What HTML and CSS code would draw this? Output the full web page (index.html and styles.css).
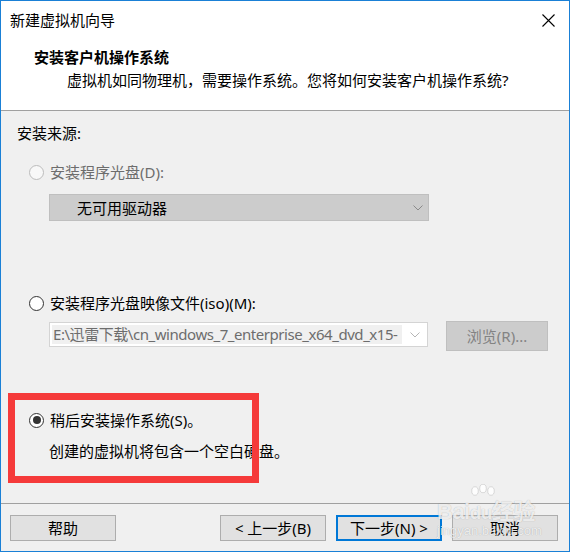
FILE: index.html
```html
<!DOCTYPE html>
<html lang="zh-CN">
<head>
<meta charset="utf-8">
<title>新建虚拟机向导</title>
<link rel="stylesheet" href="styles.css">
</head>
<body>
<div class="window">
  <div class="header">
    <div class="titlebar">
      <span class="title">新建虚拟机向导</span>
      <svg class="close" width="13" height="13" viewBox="0 0 13 13"><path d="M0.5 0.5 L12.5 12.5 M12.5 0.5 L0.5 12.5" stroke="#000" stroke-width="1.1" fill="none"/></svg>
    </div>
    <div class="heading">安装客户机操作系统</div>
    <div class="subheading">虚拟机如同物理机，需要操作系统。您将如何安装客户机操作系统?</div>
  </div>

  <div class="content">
    <div class="label">安装来源:</div>

    <div class="radio-row is-disabled">
      <span class="radio"></span>
      <span>安装程序光盘(D):</span>
    </div>
    <div class="select">
      <span class="select-text">无可用驱动器</span>
      <svg class="chev" width="10" height="6" viewBox="0 0 10 6"><path d="M0.5 0.5 L5 5 L9.5 0.5" stroke="#8a8a8a" stroke-width="1" fill="none"/></svg>
    </div>

    <div class="radio-row radio-iso">
      <span class="radio"></span>
      <span>安装程序光盘映像文件(iso)(M):</span>
    </div>
    <div class="iso-row">
      <div class="combo">
        <span class="combo-text">E:\迅雷下载\cn_windows_7_enterprise_x64_dvd_x15-</span>
        <svg class="chev chev-light" width="10" height="6" viewBox="0 0 10 6"><path d="M0.5 0.5 L5 5 L9.5 0.5" stroke="#b5b5b5" stroke-width="1" fill="none"/></svg>
      </div>
      <div class="browse">浏览(R)...</div>
    </div>

    <div class="radio-row radio-later">
      <span class="radio checked"></span>
      <span>稍后安装操作系统(S)。</span>
    </div>
    <div class="note">创建的虚拟机将包含一个空白硬盘。</div>
  </div>

  <div class="footer">
    <div class="btn">帮助</div>
    <div class="btn-group">
      <div class="btn">&lt; 上一步(B)</div>
      <div class="btn btn-default">下一步(N) &gt;</div>
      <div class="btn">取消</div>
    </div>
  </div>

  <div class="highlight"></div>

  <div class="watermark">
    <svg class="paw" width="32" height="20" viewBox="0 0 32 20">
      <ellipse cx="8" cy="7" rx="3.2" ry="4.2" fill="rgba(255,255,255,0.85)" stroke="rgba(0,0,0,0.12)"/>
      <ellipse cx="16" cy="4.5" rx="3.2" ry="4.2" fill="rgba(255,255,255,0.85)" stroke="rgba(0,0,0,0.12)"/>
      <ellipse cx="24" cy="7" rx="3.2" ry="4.2" fill="rgba(255,255,255,0.85)" stroke="rgba(0,0,0,0.12)"/>
    </svg>
    <div class="wm-main">Bai<span class="wm-du">du</span>经验</div>
    <div class="wm-sub">jingyan.baidu.com</div>
  </div>
</div>
</body>
</html>
```

FILE: styles.css
```css
* {
  box-sizing: border-box;
}

html, body {
  margin: 0;
  padding: 0;
}

body {
  width: 570px;
  height: 552px;
  font-family: "Noto Sans", "Noto Sans CJK SC", sans-serif;
  font-size: 15px;
  line-height: 20px;
  color: #000;
  background: #f0f0f0;
}

.window {
  position: relative;
  width: 570px;
  height: 552px;
  border: 1px solid #1a80d6;
  background: #f0f0f0;
  display: flex;
  flex-direction: column;
  overflow: hidden;
}

/* header */
.header {
  background: #fff;
  border-bottom: 1px solid #a0a0a0;
  height: 110px;
}

.titlebar {
  height: 36px;
  display: flex;
  justify-content: space-between;
  align-items: flex-start;
  padding: 9px 14px 0 9px;
}

.title {
  font-size: 15px;
  line-height: 20px;
}

.close {
  margin-top: 4px;
}

.heading {
  margin-top: 10px;
  padding-left: 33px;
  font-weight: bold;
  font-size: 15px;
  line-height: 20px;
}

.subheading {
  margin-top: 3px;
  padding-left: 66px;
  font-size: 15px;
  line-height: 20px;
}

/* content */
.content {
  padding-left: 16px;
}

.label {
  margin-top: 12px;
}

.radio-row {
  display: flex;
  align-items: center;
  margin-left: 12px;
  height: 20px;
}

.radio {
  width: 15px;
  height: 15px;
  border-radius: 50%;
  border: 1px solid #333;
  background: #fff;
  margin-right: 6px;
  flex: none;
  display: flex;
  align-items: center;
  justify-content: center;
}

.radio.checked::after {
  content: "";
  width: 8px;
  height: 8px;
  border-radius: 50%;
  background: #333;
}

.is-disabled {
  margin-top: 19px;
  color: #6d6d6d;
}

.is-disabled .radio {
  border-color: #bcbcbc;
  background: #f8f8f8;
}

.select {
  margin-top: 12px;
  margin-left: 32px;
  width: 380px;
  height: 27px;
  background: #cccccc;
  border: 1px solid #bfbfbf;
  display: flex;
  align-items: center;
  justify-content: space-between;
  padding: 0 5px 0 27px;
}

.chev {
  display: block;
}

.radio-iso {
  margin-top: 72px;
}

.iso-row {
  margin-top: 8px;
  margin-left: 32px;
  display: flex;
  align-items: flex-start;
}

.combo {
  margin-top: 1px;
  width: 379px;
  height: 25px;
  border: 1px solid #d4d4d4;
  background: #fff;
  padding: 2px;
  display: flex;
  align-items: center;
}

.combo-text {
  flex: 1;
  min-width: 0;
  height: 19px;
  line-height: 19px;
  background: #f0f0f0;
  color: #6d6d6d;
  white-space: nowrap;
  overflow: hidden;
  padding-left: 1px;
  letter-spacing: -0.45px;
}

.chev-light {
  margin: 0 5px 0 8px;
}

.browse {
  margin-left: 18px;
  width: 102px;
  height: 30px;
  background: #cccccc;
  border: 1px solid #bfbfbf;
  color: #838383;
  display: flex;
  align-items: center;
  justify-content: center;
}

.radio-later {
  margin-top: 59px;
}

.note {
  margin-top: 11px;
  margin-left: 32px;
}

/* footer */
.footer {
  margin-top: auto;
  border-top: 1px solid #a0a0a0;
  padding: 11px 11px 10px 9px;
  display: flex;
  justify-content: space-between;
}

.btn-group {
  display: flex;
  gap: 10px;
}

.btn {
  width: 106px;
  height: 26px;
  background: #e1e1e1;
  border: 1px solid #adadad;
  display: flex;
  align-items: center;
  justify-content: center;
}

.btn-default {
  border: 2px solid #0078d7;
}

/* annotation overlay */
.highlight {
  position: absolute;
  left: 7px;
  top: 392px;
  width: 251px;
  height: 90px;
  border: 7px solid #f53a3a;
}

/* watermark overlay */
.watermark {
  position: absolute;
  left: 436px;
  top: 483px;
  width: 104px;
  font-family: "Liberation Sans", "Noto Sans CJK SC", sans-serif;
  color: rgba(255, 255, 255, 0.8);
  text-shadow: 0 0 1px rgba(0, 0, 0, 0.3);
  line-height: 1;
}

.paw {
  display: block;
  margin-left: 30px;
}

.wm-main {
  margin-top: -3px;
  font-size: 22px;
  font-weight: bold;
  letter-spacing: -0.5px;
}

.wm-du {
  font-size: 19px;
}

.wm-sub {
  margin-top: 1px;
  font-size: 13px;
}
```
